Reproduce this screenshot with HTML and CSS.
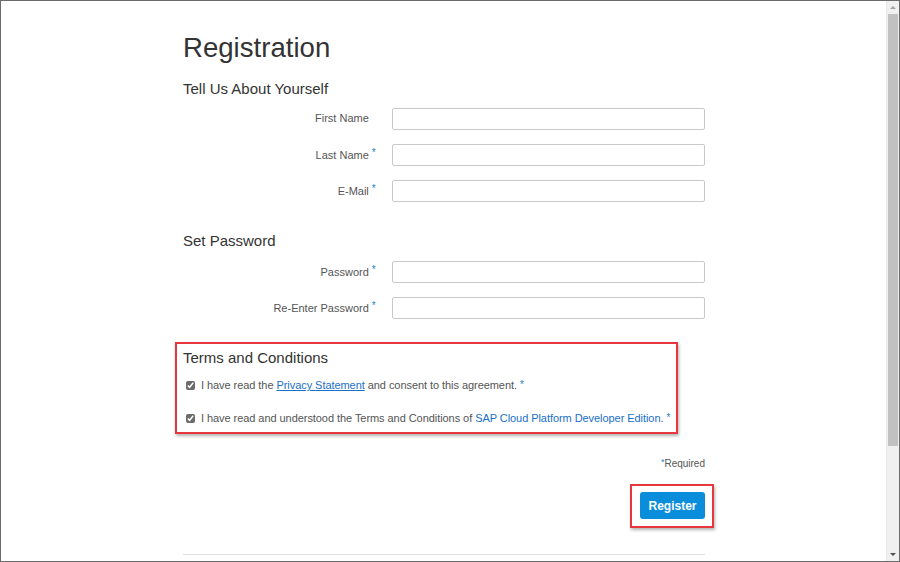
FILE: index.html
```html
<!DOCTYPE html>
<html>
<head>
<meta charset="utf-8">
<link rel="stylesheet" href="styles.css">
</head>
<body>
<div class="frame">
  <div class="viewport">
    <div class="container">
      <h1 class="title">Registration</h1>
      <h2 class="section">Tell Us About Yourself</h2>
      <div class="row"><label class="lbl">First Name</label><div class="field"><input class="inp" type="text"></div></div>
      <div class="row"><label class="lbl">Last Name<span class="req">*</span></label><div class="field"><input class="inp" type="text"></div></div>
      <div class="row"><label class="lbl">E-Mail<span class="req">*</span></label><div class="field"><input class="inp" type="text"></div></div>

      <h2 class="section pw">Set Password</h2>
      <div class="row"><label class="lbl">Password<span class="req">*</span></label><div class="field"><input class="inp" type="password"></div></div>
      <div class="row"><label class="lbl">Re-Enter Password<span class="req">*</span></label><div class="field"><input class="inp" type="password"></div></div>

      <div class="terms">
        <h2 class="section terms-title">Terms and Conditions</h2>
        <div class="check"><input type="checkbox" class="cb" checked><span>I have read the <a class="ulink">Privacy Statement</a> and consent to this agreement. <span class="req">*</span></span></div>
        <div class="check second"><input type="checkbox" class="cb" checked><span>I have read and understood the Terms and Conditions of <a class="plink">SAP Cloud Platform Developer Edition</a>. <span class="req">*</span></span></div>
      </div>

      <div class="required"><span class="req">*</span>Required</div>
      <div class="actions">
        <div class="highlight"><button class="btn">Register</button></div>
      </div>
      <div class="sep"></div>
    </div>
  </div>
  <div class="scrollbar">
    <div class="arrow up"></div>
    <div class="thumb"></div>
    <div class="track"></div>
    <div class="arrow down"></div>
  </div>
</div>
</body>
</html>
```
FILE: styles.css
```css
html, body {
  margin: 0;
  padding: 0;
  background: #fff;
}
body {
  font-family: "Liberation Sans", Arial, sans-serif;
}
.frame {
  width: 900px;
  height: 562px;
  box-sizing: border-box;
  border: 1px solid #6b6b6b;
  display: flex;
  overflow: hidden;
  background: #fff;
}
.viewport {
  flex: 1;
  overflow: hidden;
}
.container {
  width: 522px;
  margin-left: 182px;
}
.title {
  margin: 0;
  padding-top: 29px;
  font-size: 27.6px;
  font-weight: normal;
  color: #333;
  line-height: 36px;
}
.section {
  margin: 0;
  font-size: 15px;
  font-weight: normal;
  color: #333;
  line-height: 20px;
}
.title + .section {
  margin-top: 13px;
  margin-bottom: 9px;
}
.section.pw {
  margin-top: 29px;
  margin-bottom: 10px;
}
.row {
  display: flex;
  align-items: center;
  height: 22px;
  margin-bottom: 14px;
}
.lbl {
  width: 40%;
  box-sizing: border-box;
  padding-right: 23px;
  padding-bottom: 2px;
  text-align: right;
  font-size: 11px;
  color: #555;
  white-space: nowrap;
}
.req {
  color: #2a7fc9;
  font-size: 10px;
  vertical-align: 3px;
}
.lbl .req {
  display: inline-block;
  width: 8px;
  margin-right: -8px;
  padding-left: 3px;
  box-sizing: border-box;
  text-align: left;
}
.field {
  width: 60%;
}
.inp {
  display: block;
  width: 100%;
  height: 22px;
  box-sizing: border-box;
  border: 1px solid #c9c9c9;
  border-radius: 2px;
  margin: 0;
  padding: 0 6px;
  background: #fff;
}
.terms {
  margin-left: -8px;
  margin-top: 23px;
  width: 503px;
  box-sizing: border-box;
  border: 2px solid #e8363d;
  box-shadow: 1px 2px 3px rgba(0,0,0,0.3);
  padding: 4px 0 4px 6px;
}
.terms-title {
  margin: 0 0 7px 0;
  font-size: 15px;
  line-height: 20px;
}
.check {
  display: flex;
  align-items: center;
  font-size: 11px;
  letter-spacing: -0.06px;
  color: #555;
  height: 20px;
  padding-left: 3px;
  white-space: nowrap;
}
.check .req {
  vertical-align: 1px;
}
.check.second {
  margin-top: 13px;
}
.cb {
  width: 9px;
  height: 9px;
  margin: 0 6px 0 0;
  accent-color: #6b6b6b;
}
.ulink {
  color: #1a6fc9;
  text-decoration: underline;
}
.plink {
  color: #1a6fc9;
  text-decoration: none;
}
.required {
  margin-top: 21px;
  text-align: right;
  font-size: 10px;
  color: #555;
  line-height: 14px;
}
.required .req {
  font-size: 9px;
  vertical-align: 2px;
}
.actions {
  display: flex;
  justify-content: flex-end;
  margin-top: 13px;
  margin-right: -9px;
}
.highlight {
  border: 2px solid #e8363d;
  box-shadow: 1px 2px 3px rgba(0,0,0,0.3);
  padding: 6px 7px 7px 8px;
}
.btn {
  display: block;
  width: 65px;
  height: 27px;
  border: none;
  border-radius: 3px;
  background: #0a8edb;
  color: #fff;
  font-family: "Liberation Sans", Arial, sans-serif;
  font-weight: bold;
  font-size: 12px;
  padding: 0;
}
.sep {
  margin-top: 26px;
  height: 1px;
  background: #e0e0e0;
}
.scrollbar {
  width: 12px;
  display: flex;
  flex-direction: column;
  background: #f0f0f0;
  border-left: 1px solid #e6e6e6;
}
.arrow {
  height: 13px;
  position: relative;
}
.arrow.up::after, .arrow.down::after {
  content: "";
  position: absolute;
  left: 3px;
  border-left: 3px solid transparent;
  border-right: 3px solid transparent;
}
.arrow.up::after {
  top: 5px;
  border-bottom: 3px solid #a3a3a3;
}
.arrow.down::after {
  top: 5px;
  border-top: 3px solid #505050;
}
.thumb {
  height: 432px;
  background: #c1c1c1;
  margin: 0 1px;
}
.track {
  flex: 1;
}
```
